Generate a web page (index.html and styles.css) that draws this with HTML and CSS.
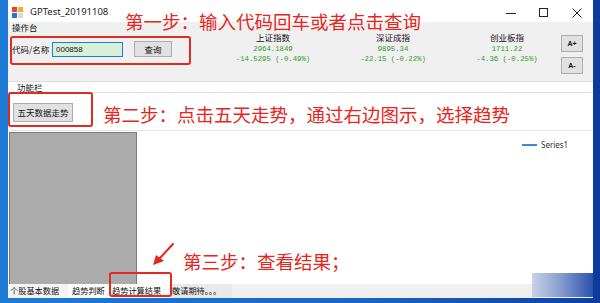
FILE: index.html
```html
<!DOCTYPE html>
<html lang="zh-CN">

<head>
    <meta charset="UTF-8">
    <title>GPTest_20191108</title>
    <link rel="stylesheet" href="styles.css">
</head>

<body>
    <div class="desktop">
        <div class="window">
            <div class="titlebar">
                <svg class="app-icon" width="11" height="11" viewBox="0 0 11 11">
                    <rect x="0" y="0" width="5" height="5" fill="#e8402a"/>
                    <rect x="6" y="0" width="5" height="5" fill="#f3b12b"/>
                    <rect x="0" y="6" width="5" height="5" fill="#2f6fd0"/>
                    <rect x="6" y="6" width="5" height="5" fill="#d8d8d8"/>
                </svg>
                <span class="title">GPTest_20191108</span>
                <div class="controls">
                    <svg width="10" height="10" viewBox="0 0 10 10"><path d="M0 5.5h10" stroke="#222" stroke-width="1"/></svg>
                    <svg width="10" height="10" viewBox="0 0 10 10"><rect x="0.5" y="0.5" width="8" height="8" fill="none" stroke="#222" stroke-width="1"/></svg>
                    <svg width="10" height="10" viewBox="0 0 10 10"><path d="M0.5 0.5l9 9M9.5 0.5l-9 9" stroke="#222" stroke-width="1"/></svg>
                </div>
            </div>

            <div class="console">
                <div class="caption">操作台</div>
                <div class="console-row">
                    <div class="query">
                        <label for="code">代码/名称</label>
                        <input id="code" class="code" type="text" value="000858">
                        <button class="btn search">查询</button>
                    </div>
                    <div class="index">
                        <div class="index-name">上证指数</div>
                        <div class="index-num">2964.1849</div>
                        <div class="index-num">-14.5295 (-0.49%)</div>
                    </div>
                    <div class="index">
                        <div class="index-name">深证成指</div>
                        <div class="index-num">9895.34</div>
                        <div class="index-num">-22.15 (-0.22%)</div>
                    </div>
                    <div class="index">
                        <div class="index-name">创业板指</div>
                        <div class="index-num">1711.22</div>
                        <div class="index-num">-4.36 (-0.25%)</div>
                    </div>
                    <div class="font-size">
                        <button class="btn small">A+</button>
                        <button class="btn small">A-</button>
                    </div>
                </div>
            </div>

            <div class="tools">
                <div class="tools-caption">功能栏</div>
                <div class="tools-row">
                    <button class="btn five-days">五天数据走势</button>
                </div>
            </div>

            <div class="chart">
                <div class="grid-box"></div>
                <div class="plot">
                    <div class="legend"><i></i>Series1</div>
                </div>
            </div>

            <div class="tabs">
                <span class="tab">个股基本数据</span>
                <span class="tab tab-white">趋势判断</span>
                <span class="tab tab-white">趋势计算结果</span>
                <span class="tab tab-dim">敬请期待。。。</span>
            </div>

            <!-- annotations drawn over the window -->
            <div class="note note-1">第一步：输入代码回车或者点击查询</div>
            <div class="note note-2">第二步：点击五天走势，通过右边图示，选择趋势</div>
            <div class="note note-3">第三步：查看结果；</div>
            <div class="mark mark-1"></div>
            <div class="mark mark-2"></div>
            <div class="mark mark-3"></div>
            <svg class="arrow" width="24" height="24" viewBox="0 0 24 24">
                <path d="M21 1 L8 15" stroke="#e8251c" stroke-width="2" stroke-linecap="round"/>
                <polygon points="1,22 4,12 12,18" fill="#e8251c"/>
            </svg>
            <div class="thumb"></div>
        </div>
    </div>
</body>

</html>
```

FILE: styles.css
```css
html,
body {
    margin: 0;
    padding: 0;
}

body {
    width: 600px;
    height: 303px;
    overflow: hidden;
    font-family: "Noto Sans CJK SC", "Noto Sans", sans-serif;
    color: #111;
}

.desktop {
    width: 600px;
    height: 303px;
    padding-left: 8px;
    box-sizing: border-box;
    background: linear-gradient(to right, #1e7bd6, #1766c6 60%, #0f45a8 95%, #0b3a9c);
}

.window {
    position: relative;
    width: 585px;
    height: 297px;
    display: flex;
    flex-direction: column;
    background: #fff;
}

/* title bar */
.titlebar {
    height: 22px;
    display: flex;
    align-items: center;
    background: #fff;
    flex-shrink: 0;
}

.app-icon {
    margin-left: 4px;
    margin-top: 2px;
}

.title {
    margin-left: 7px;
    font-family: "Noto Sans", sans-serif;
    font-size: 9.5px;
    color: #222;
}

.controls {
    margin-left: auto;
    display: flex;
    gap: 23px;
    padding-right: 11px;
    align-items: center;
    margin-top: 3px;
}

/* operation panel */
.console {
    height: 59px;
    background: #f0f0f0;
    border-bottom: 1px solid #dcdcdc;
    padding-left: 4px;
    flex-shrink: 0;
}

.caption {
    height: 11px;
    font-size: 8.5px;
    line-height: 10px;
}

.console-row {
    display: grid;
    grid-template-columns: 201px 120px 120px 108px 22px;
    align-items: start;
}

.query {
    display: flex;
    align-items: center;
    margin-top: 8px;
    height: 16px;
    font-size: 8.5px;
}

.query label {
    width: 40px;
}

.code {
    width: 71px;
    height: 15px;
    box-sizing: border-box;
    border: 1px solid #1a7fd9;
    background: #d8efd8;
    padding: 0 3px;
    font-family: "Liberation Sans", sans-serif;
    font-size: 8px;
    color: #111;
    outline: none;
}

.btn {
    font-family: "Noto Sans CJK SC", sans-serif;
    background: #e1e1e1;
    border: 1px solid #adadad;
    padding: 0;
    font-size: 8.5px;
    line-height: 1;
    color: #111;
    box-sizing: border-box;
}

.search {
    margin-left: 11px;
    width: 38px;
    height: 16px;
}

.index {
    text-align: center;
    margin-top: -1px;
}

.index-name {
    font-size: 8.5px;
    line-height: 10px;
    margin-bottom: 2px;
}

.index-num {
    font-family: "Liberation Mono", monospace;
    font-size: 7.3px;
    line-height: 10px;
    color: #2f9a2f;
    white-space: nowrap;
}

.font-size {
    display: flex;
    flex-direction: column;
    gap: 5px;
    margin-top: 2px;
}

.small {
    width: 22px;
    height: 17px;
    font-family: "Liberation Sans", sans-serif;
    font-weight: bold;
    font-size: 7px;
}

/* tool group */
.tools {
    height: 49px;
    flex-shrink: 0;
    border-bottom: 1px solid #e4e4e4;
    box-sizing: border-box;
}

.tools-caption {
    height: 10px;
    padding-left: 9px;
    font-size: 8.5px;
    line-height: 11px;
    border-bottom: 1px solid #e2e2e2;
}

.tools-row {
    display: flex;
    padding: 10px 0 0 5px;
}

.five-days {
    width: 60px;
    height: 19px;
}

/* chart */
.chart {
    height: 153px;
    display: flex;
    flex-shrink: 0;
}

.grid-box {
    width: 128px;
    margin: 1px 0 0 1px;
    background: #ababab;
    border: 1px solid #7a7a7a;
    border-bottom: none;
    box-sizing: border-box;
}

.plot {
    flex: 1;
    position: relative;
}

.legend {
    display: flex;
    align-items: center;
    gap: 4px;
    margin: 8px 0 0 385px;
    font-family: "Noto Sans", sans-serif;
    font-size: 8px;
    color: #333;
}

.legend i {
    display: block;
    width: 15px;
    height: 2px;
    background: #3b88d4;
}

/* bottom tabs */
.tabs {
    height: 14px;
    display: flex;
    align-items: center;
    background: #f0f0f0;
    font-size: 8.2px;
    line-height: 12px;
    flex-shrink: 0;
}

.tab {
    height: 14px;
    padding: 0 3px;
    white-space: nowrap;
    box-sizing: border-box;
}

.tab:nth-child(1) {
    width: 60px;
    padding-left: 2px;
    background: #f4f4f4;
}

.tab:nth-child(2) {
    width: 41px;
    padding-left: 4px;
}

.tab:nth-child(3) {
    width: 62px;
    padding-left: 3px;
}

.tab:nth-child(4) {
    width: 61px;
    padding-left: 1px;
}

.tab-white {
    background: #fbfbfb;
}

.tab-dim {
    background: #e9e9e9;
}

/* annotations */
.note {
    position: absolute;
    color: #e8251c;
    font-size: 18.5px;
    line-height: 19px;
    white-space: nowrap;
}

.note-1 {
    left: 117px;
    top: 12px;
}

.note-2 {
    left: 95px;
    top: 105px;
}

.note-3 {
    left: 175px;
    top: 252px;
}

.mark {
    position: absolute;
    border: 2px solid #e02a24;
    border-radius: 3px;
    box-sizing: border-box;
}

.mark-1 {
    left: 2px;
    top: 36px;
    width: 181px;
    height: 29px;
}

.mark-2 {
    left: 0;
    top: 92px;
    width: 85px;
    height: 35px;
}

.mark-3 {
    left: 101px;
    top: 272px;
    width: 63px;
    height: 25px;
}

.arrow {
    position: absolute;
    left: 144px;
    top: 243px;
}

.thumb {
    position: absolute;
    left: 524px;
    top: 273px;
    width: 61px;
    height: 24px;
    background: linear-gradient(to right, #c9d2e8, #8a9fd0 45%, #2c52ac);
}
```
